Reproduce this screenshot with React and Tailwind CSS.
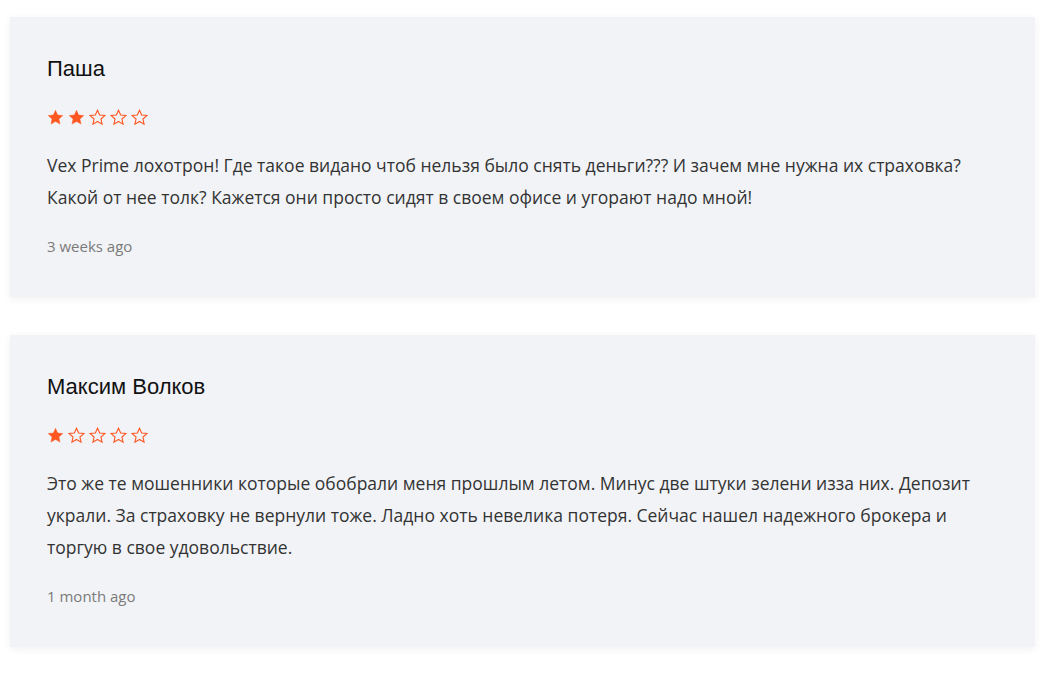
import React from "react";

const reviews = [
  {
    name: "Паша",
    rating: 2,
    text: "Vex Prime лохотрон! Где такое видано чтоб нельзя было снять деньги??? И зачем мне нужна их страховка? Какой от нее толк? Кажется они просто сидят в своем офисе и угорают надо мной!",
    time: "3 weeks ago",
  },
  {
    name: "Максим Волков",
    rating: 1,
    text: "Это же те мошенники которые обобрали меня прошлым летом. Минус две штуки зелени изза них. Депозит украли. За страховку не вернули тоже. Ладно хоть невелика потеря. Сейчас нашел надежного брокера и торгую в свое удовольствие.",
    time: "1 month ago",
  },
];

function Star({ filled }) {
  return (
    <svg viewBox="0 0 24 24" className="h-[17px] w-[17px]">
      <path
        d="M12 1.8l3.05 6.7 7.3.75-5.48 4.9 1.57 7.2L12 17.6l-6.44 3.75 1.57-7.2-5.48-4.9 7.3-.75z"
        fill={filled ? "#ff5722" : "none"}
        stroke="#ff5722"
        strokeWidth={filled ? 0.6 : 1.6}
      />
    </svg>
  );
}

function ReviewCard({ review }) {
  return (
    <div className="bg-[#f2f3f7] px-[37px] pt-[37px] pb-[40px] shadow-[0_2px_8px_rgba(0,0,0,0.06)]">
      <h3 className="font-['Liberation_Sans',Arial,sans-serif] text-[22px] leading-[30px] text-[#111]">
        {review.name}
      </h3>
      <div className="mt-[25px] flex gap-[4px]">
        {[1, 2, 3, 4, 5].map((i) => (
          <Star key={i} filled={i <= review.rating} />
        ))}
      </div>
      <p className="mt-[23px] font-['Open_Sans',sans-serif] text-[17.5px] leading-[32px] text-[#333]">
        {review.text}
      </p>
      <div className="mt-[22px] font-['Open_Sans',sans-serif] text-[15px] leading-[22px] text-[#7a7a7a]">
        {review.time}
      </div>
    </div>
  );
}

export default function App() {
  return (
    <div className="min-h-screen bg-white pl-[10px] pr-[14px] pt-[17px]">
      <div className="flex flex-col gap-[38px]">
        {reviews.map((r) => (
          <ReviewCard key={r.name} review={r} />
        ))}
      </div>
    </div>
  );
}
